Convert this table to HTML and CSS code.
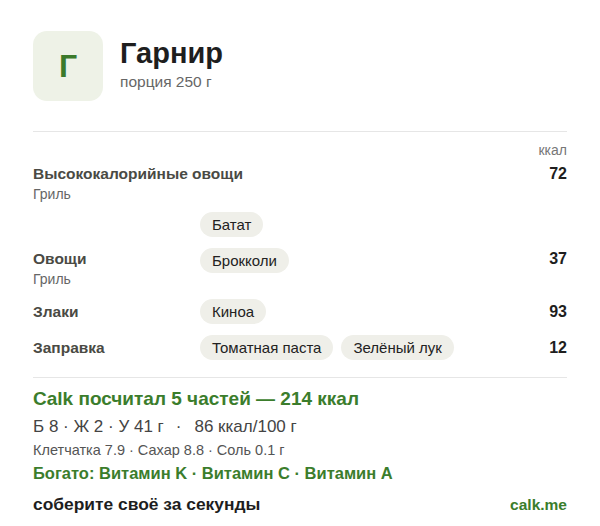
FILE: index.html
```html
<!DOCTYPE html>
<html lang="ru">
<head>
<meta charset="utf-8">
<link rel="stylesheet" href="styles.css">
</head>
<body>
<div class="card">
  <header class="head">
    <div class="icon">Г</div>
    <div class="head-text">
      <h1 class="title">Гарнир</h1>
      <div class="portion">порция 250 г</div>
    </div>
  </header>
  <hr class="divider">
  <div class="unit">ккал</div>
  <div class="table">
    <div class="name name-wide"><div class="n">Высококалорийные овощи</div><div class="sub">Гриль</div></div>
    <div class="kcal">72</div>
    <div class="chips chips-under"><span class="chip">Батат</span></div>

    <div class="name"><div class="n">Овощи</div><div class="sub">Гриль</div></div>
    <div class="chips"><span class="chip">Брокколи</span></div>
    <div class="kcal">37</div>

    <div class="name name-mid"><div class="n">Злаки</div></div>
    <div class="chips"><span class="chip">Киноа</span></div>
    <div class="kcal kcal-mid">93</div>

    <div class="name name-mid"><div class="n">Заправка</div></div>
    <div class="chips"><span class="chip">Томатная паста</span><span class="chip">Зелёный лук</span></div>
    <div class="kcal kcal-mid">12</div>
  </div>
  <hr class="divider divider2">
  <div class="total">Calk посчитал 5 частей — 214 ккал</div>
  <div class="macros"><span>Б 8 · Ж 2 · У 41 г</span><span class="sep">·</span><span>86 ккал/100 г</span></div>
  <div class="extra">Клетчатка 7.9 · Сахар 8.8 · Соль 0.1 г</div>
  <div class="rich">Богато: Витамин K · Витамин C · Витамин A</div>
  <footer class="foot">
    <span class="cta">соберите своё за секунды</span>
    <span class="brand">calk.me</span>
  </footer>
</div>
</body>
</html>
```
FILE: styles.css
```css
* { box-sizing: border-box; }
html, body { margin: 0; background: #fff; }
body {
  font-family: "Liberation Sans", Arial, sans-serif;
  color: #222;
}
.card { padding: 31px 33px 0 33px; }
.head { display: flex; align-items: flex-start; gap: 17px; }
.icon {
  width: 70px; height: 70px; border-radius: 14px;
  background: #eef2e7;
  color: #3b7a2b;
  font-weight: 700; font-size: 32px;
  display: flex; align-items: center; justify-content: center;
  flex: none;
}
.head-text { padding-top: 5px; }
.title { margin: 0; font-size: 29px; line-height: 34px; font-weight: 700; color: #1e1e1e; }
.portion { font-size: 15.5px; line-height: 20px; color: #666; margin-top: 2px; }
.divider { border: 0; border-top: 1px solid #e6e6e6; margin: 30px 0 0 0; }
.unit { text-align: right; font-size: 14px; line-height: 16px; color: #777; margin-top: 10px; }
.table {
  display: grid;
  grid-template-columns: 167px 1fr auto;
  row-gap: 11px;
  margin-top: 5px;
  align-items: start;
}
.name { grid-column: 1; padding-top: 1px; }
.chips { grid-column: 2; display: flex; gap: 8px; flex-wrap: wrap; }
.kcal { grid-column: 3; padding-top: 1px; }
.name-wide { grid-column: 1 / 3; }
.chips-under { margin-top: -2px; }
.name-mid { align-self: center; padding-top: 0; }
.n { font-size: 15.5px; line-height: 20px; font-weight: 700; color: #4a4a44; white-space: nowrap; }
.sub { font-size: 14px; line-height: 18px; margin-top: 1px; color: #666; }
.kcal { font-size: 16px; line-height: 20px; font-weight: 700; color: #1e1e1e; text-align: right; }
.kcal-mid { align-self: center; padding-top: 0; }
.chip {
  display: inline-block;
  background: #efefe9;
  border-radius: 13px;
  height: 25px; line-height: 25px;
  padding: 0 12px;
  font-size: 15px; color: #222;
  white-space: nowrap;
}
.divider2 { margin-top: 17px; }
.total { margin-top: 9px; font-size: 19px; line-height: 24px; font-weight: 700; color: #3b7d2c; }
.macros { margin-top: 5px; font-size: 17px; line-height: 22px; color: #444; }
.macros .sep { margin: 0 13px 0 12px; }
.extra { margin-top: 3px; font-size: 14.5px; line-height: 18px; color: #555; }
.rich { margin-top: 4px; font-size: 16.5px; line-height: 20px; font-weight: 700; color: #3b7d2c; }
.foot { margin-top: 10px; display: flex; justify-content: space-between; align-items: baseline; line-height: 22px; }
.cta { font-size: 17.4px; font-weight: 700; color: #1e1e1e; }
.brand { font-size: 15.5px; font-weight: 700; color: #3b7d2c; }
```
